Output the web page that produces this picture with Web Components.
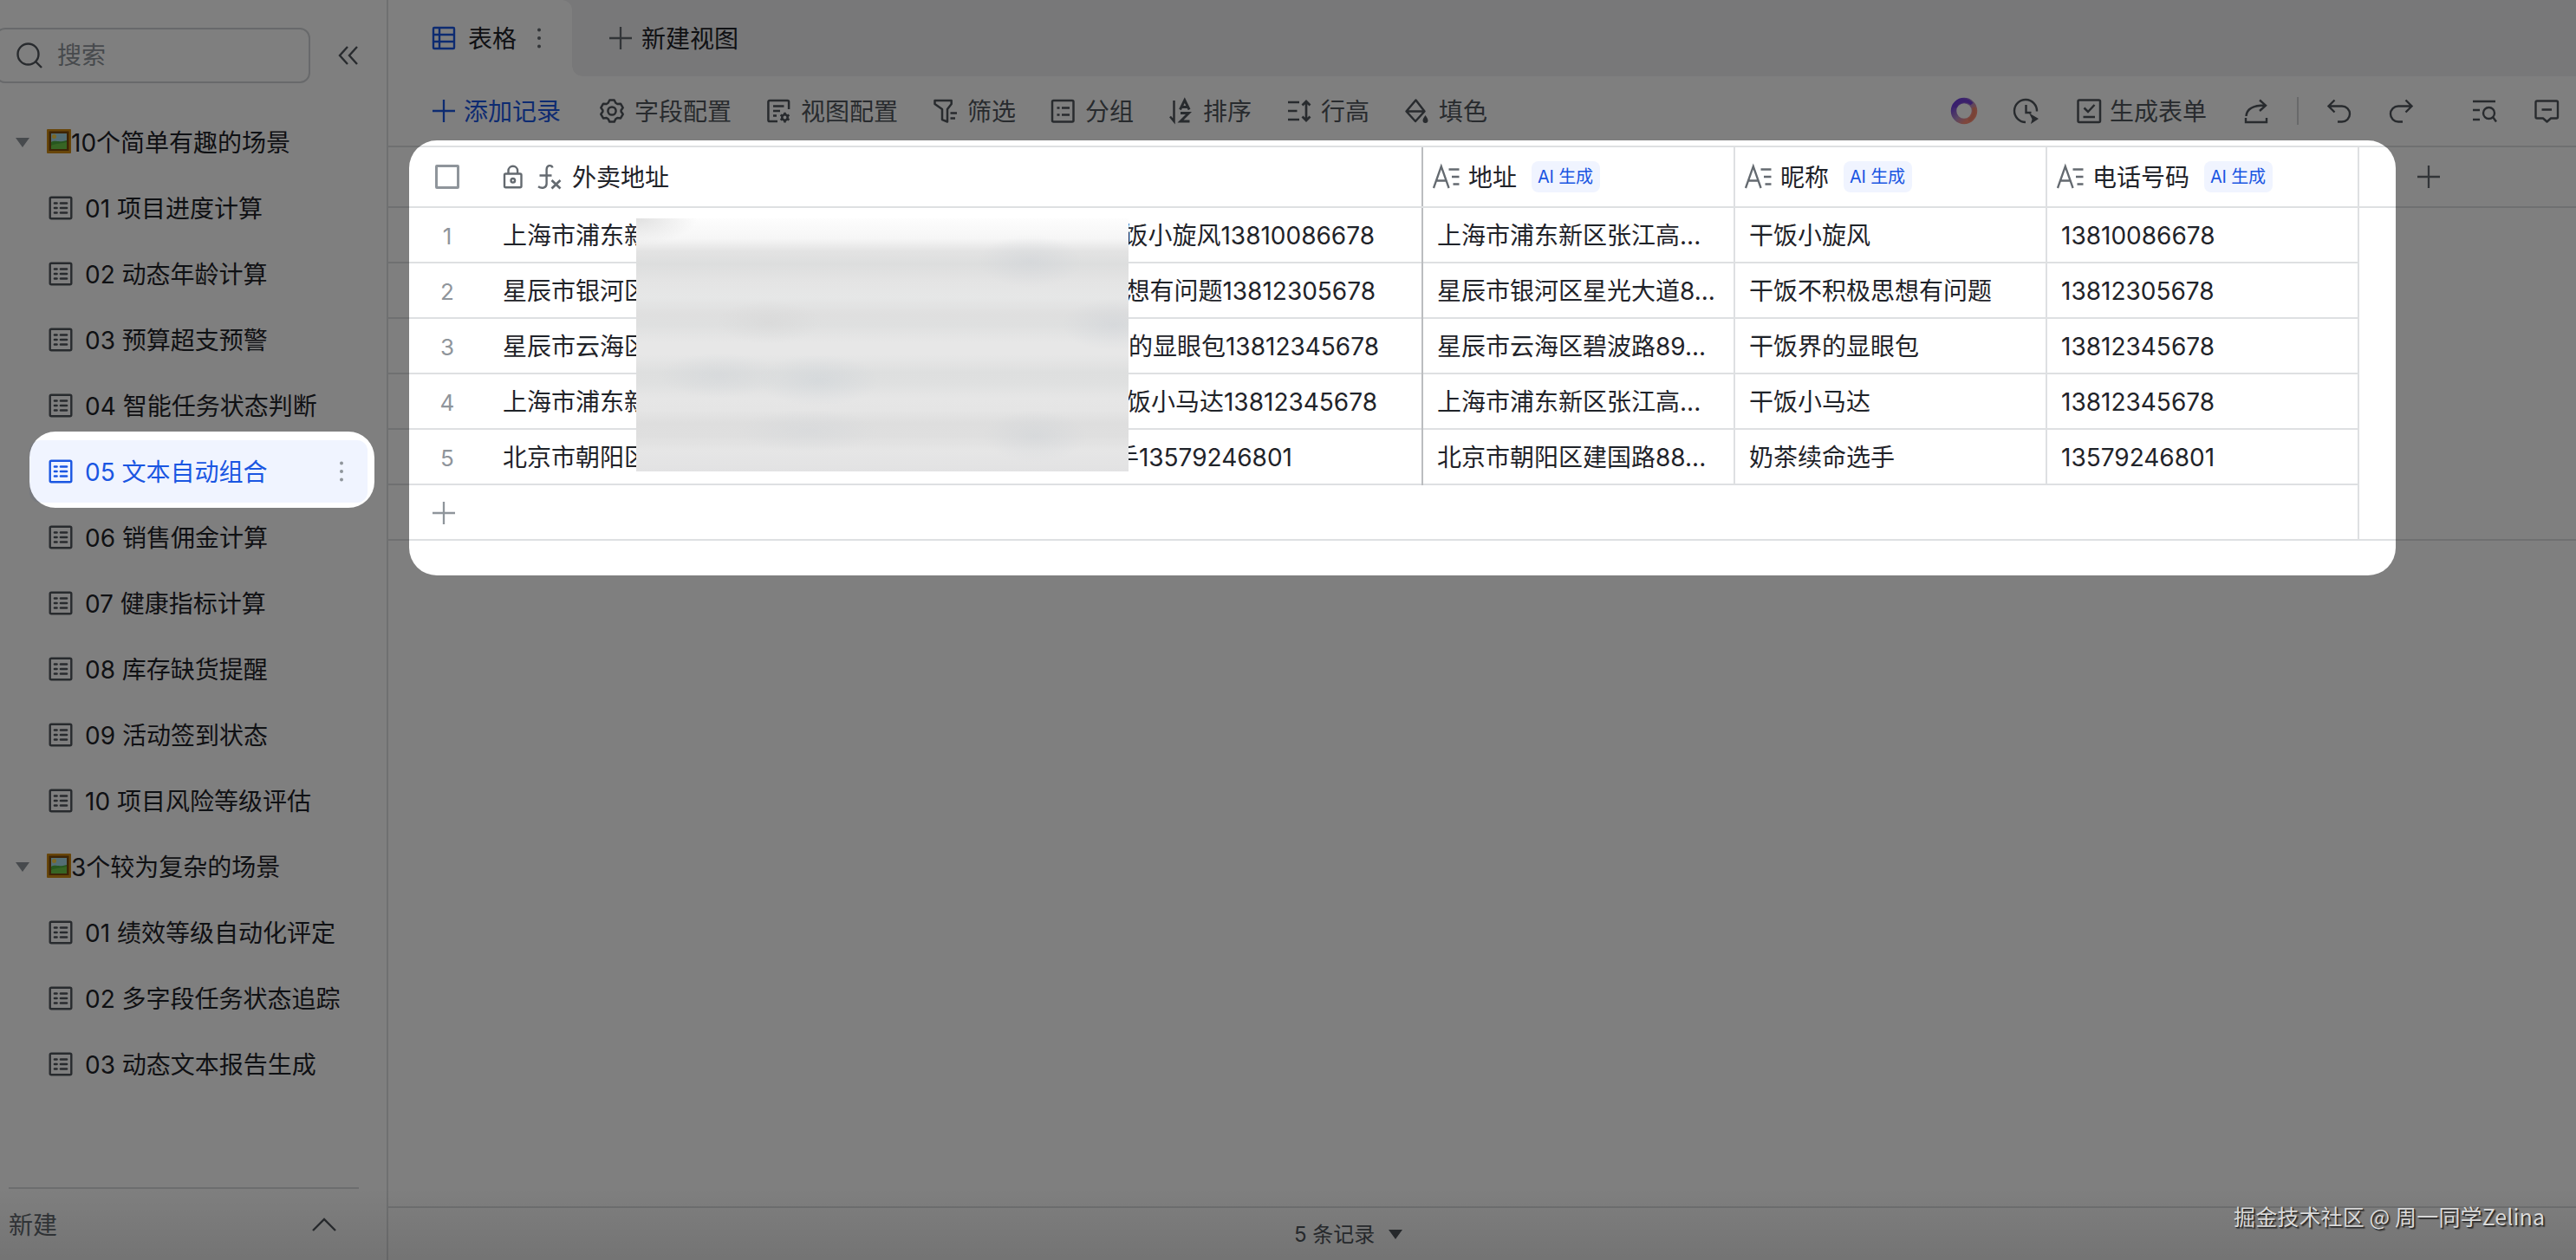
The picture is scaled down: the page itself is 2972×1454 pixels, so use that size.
<!DOCTYPE html>
<html lang="zh-CN">
<head>
<meta charset="utf-8">
<title>多维表格</title>
<style>
html,body{margin:0;padding:0}
body{width:2972px;height:1454px;overflow:hidden;background:#fff;
font-family:Inter,"Noto Sans CJK SC",sans-serif;font-size:28px;line-height:40px;color:#1f2329;
--line:#dee0e2;--blue:#1a56e2;--icon:#51565d}
</style>
</head>
<body>
<base-app></base-app>
<script>
const ICONS={
search:'<circle cx="12.5" cy="12.5" r="12" /><path d="M21 21l7 7"/>',
collapse:'<path d="M13 4L4 14l9 10M24 4l-9 10 9 10"/>',
sheet:'<rect x="1.7" y="1.7" width="24.6" height="24.6" rx="1.5"/><path d="M7 8.5h2.5M7 14h2.5M7 19.5h2.5M14 8.5h7M14 14h7M14 19.5h7" stroke-linecap="round" stroke-width="2.7"/>',
dots:'<g fill="currentColor" stroke="none"><circle cx="14" cy="4.6" r="2"/><circle cx="14" cy="14" r="2"/><circle cx="14" cy="23.6" r="2"/></g>',
grid:'<rect x="2" y="2" width="24" height="24" rx="1"/><path d="M9 2v24M2 10h24M2 18h24"/>',
plus:'<path d="M14 1v26M1 14h26" stroke-width="2.3"/>',
gear:'<path d="M11.3 1.5h5.4l1.6 3.3 2 1.2 3.7-.3 2.7 4.6-2.1 3v1.5l2.1 3-2.7 4.6-3.7-.3-2 1.2-1.6 3.3h-5.4l-1.6-3.3-2-1.2-3.7.3-2.7-4.6 2.1-3v-1.5l-2.1-3L4 5.7l3.7.3 2-1.2z" stroke-linejoin="round"/><circle cx="14" cy="14" r="4.6"/>',
viewcfg:'<path d="M13 26H4a1.6 1.6 0 0 1-1.600-1.600V3.600A1.600 1.600 0 0 1 4 2h20.500a1.600 1.600 0 0 1 1.600 1.600V12M8 8.500h12.500M8 14h8M8 19.500h4"/><circle cx="21.500" cy="21.500" r="3.200" stroke-width="2.600"/><path d="M21.500 15.700v3M21.500 24.500v3M16.500 18.600l2.500 1.400M24 23l2.500 1.400M16.500 24.400L19 23M24 20l2.500-1.400" stroke-width="2.600"/>',
filter:'<path d="M2.500 2h19.200v4l-4.700 6v14.500l-6-2.400V12L2.500 6z" stroke-linejoin="round"/><path d="M20.500 16.500h7.500M20.500 22.500h5.500"/>',
group:'<rect x="2" y="2" width="24.500" height="24.500" rx="1.500"/><path d="M7.500 10.500h3M13 10.500h9M7.500 18.500h3M13 18.500h9"/>',
sort:'<path d="M6.500 2v24L2 20.500"/><path d="M13.500 12.500L18.800 1.500l5.300 11M15.500 9.500h6.600M14 16.500h9.500L14 26h10.500" stroke-width="2.900"/>',
rowh:'<path d="M2 4h13M2 14h10.500M2 24h13M23 3v22M18.500 7.500L23 3l4.500 4.500M18.500 20.500L23 25l4.500-4.500" stroke-width="2.700"/>',
fill:'<path d="M13.500 1.500L2.500 14.500 13 26l10.500-11.500zM3.500 14.500h20" stroke-linejoin="round" stroke-width="2.500"/><path d="M24.500 19c1.800 2.800 3 4.200 3 5.900a3 3 0 0 1-6 0c0-1.700 1.200-3.100 3-5.900z" fill="currentColor" stroke="none"/>',
ring:'<defs><linearGradient id="r" x1="0" y1="0" x2="1" y2="1"><stop offset=".1" stop-color="#6e3de0"/><stop offset=".5" stop-color="#b28cc8"/><stop offset=".8" stop-color="#ff8f78"/></linearGradient></defs><circle cx="14" cy="14" r="12" stroke="url(#r)" stroke-width="6.500"/><path d="M3 10A12 12 0 0 1 23 6" stroke="#7440d8" stroke-width="4"/><path d="M25 10a12 12 0 0 1-6 15" stroke="#f2876c" stroke-width="3.500"/>',
clock:'<path d="M14 27A13 13 0 1 1 27 14.500M14.500 7v9h6"/><path d="M18 16.500L29 23 20 29l1.500-5.500z" fill="currentColor" stroke="none"/>',
form:'<rect x="1.500" y="1.500" width="25.500" height="25.500" rx="1.500"/><path d="M8.500 10.500l4.500 4.500 7.500-8M7.500 21h13.500"/>',
share:'<path d="M2.500 20C3 12 9 7.500 24.500 7.500M18 1.500l7 6.200-7 6.300M2 22v5h24v-5"/>',
undo:'<path d="M9.500 1.500L2.500 8.500l7 7M2.500 8.500h15.500a8.900 8.900 0 0 1 0 18h-5"/>',
redo:'<path d="M18.500 1.500l7 7-7 7M25.500 8.500H10a8.900 8.900 0 0 0 0 18h5"/>',
find:'<path d="M1 3h26M1 13h8M1 24h8"/><circle cx="19.500" cy="16.500" r="6.500"/><path d="M24 21l4 5.500"/>',
comment:'<path d="M3 2.500h22.500a1.500 1.500 0 0 1 1.500 1.500v17a1.500 1.500 0 0 1-1.500 1.500H19l-4.500 4-4.500-4H3a1.500 1.500 0 0 1-1.500-1.500V4A1.500 1.500 0 0 1 3 2.500zM8.500 12.500h11.500" stroke-linejoin="round"/>',
lock:'<rect x="4" y="10.500" width="19.500" height="15.800" rx="1.500"/><path d="M8.500 10.500V7a5.300 5.300 0 0 1 10.600 0v3.500"/><circle cx="13.800" cy="18.300" r="2.300"/>',
fx:'<path d="M19.500 3.500C18.500 .2 12.800-.2 12.600 5.500V22c0 5-5.800 6-9.600 3.300M4.500 12.500h14"/><path d="M18.500 18l10 9.500M28.500 18l-10 9.500" stroke-width="2.800"/>',
text:'<path d="M1 27L9.800 2l8.800 25M4 18.500h11.500M18.500 5.500h12M22 14h8.500M23.500 22.500h7"/>',
up:'<path d="M1 21l13-13 13 13"/>',
caret:'<path d="M6 9h16l-8 11z" fill="currentColor" stroke="none"/>',
picture:'<g stroke="none"><rect width="28" height="28" rx="1" fill="#d08c14"/><path d="M2.500 2.500h23v22.500h-23z" fill="#7a4a0e"/><path d="M5 5h18v18H5z" fill="#a9dcea"/><path d="M5 15c5-3 8 1 18-2v10H5z" fill="#4fae3f"/><path d="M5 19c6-3 12-2 18-4v8H5z" fill="#6fca48"/><circle cx="8.500" cy="8.500" r="2.500" fill="#fbd348"/></g>'
};
const define=(tag,render)=>customElements.define(tag,class extends HTMLElement{
  constructor(){super();this.attachShadow({mode:'open'})}
  connectedCallback(){this.shadowRoot.innerHTML=render(this)}
});
const a=(el,n,d='')=>el.getAttribute(n)??d;

define('ui-icon',el=>`<style>:host{display:block;flex:none;width:${a(el,'w','28')}px;height:28px;color:var(--icon)}
:host([muted]){color:#8f959b}:host([mid]){color:#646a70}:host([blue]){color:var(--blue)}
svg{display:block;overflow:visible;width:100%;height:100%}</style>
<svg viewBox="0 0 ${a(el,'w','28')} 28" fill="none" stroke="currentColor" stroke-width="${a(el,'s','2.4')}">${ICONS[a(el,'name')]}</svg>`);

define('nav-group',el=>`<style>:host{display:flex;align-items:center;height:76px;padding-left:12px;white-space:nowrap}
.p{margin:-2px 0 0 14px}span{padding-top:2px}</style><ui-icon name="caret" muted></ui-icon><ui-icon class="p" name="picture"></ui-icon><span><slot></slot></span>`);

define('nav-item',el=>`<style>:host{display:flex;height:76px;align-items:center}
div{flex:1;display:flex;align-items:center;height:72px;margin-left:34px;padding-left:22px;border-radius:12px;white-space:nowrap}
span{flex:1;margin-left:14px;padding-top:2px}:host([active]) div{background:#f0f4ff;color:var(--blue)}
:host([active]) .d{margin-right:16px}</style>
<div><ui-icon name="sheet" ${el.hasAttribute('active')?'blue':''}></ui-icon><span><slot></slot></span>${el.hasAttribute('active')?'<ui-icon class="d" name="dots" muted></ui-icon>':''}</div>`);

define('side-bar',()=>`<style>:host{display:flex;flex-direction:column;box-sizing:border-box;width:448px;height:1454px;border-right:2px solid var(--line);flex:none}
.top{display:flex;align-items:center;height:126px;box-sizing:border-box;padding-top:2px}
.box{width:364px;height:64px;box-sizing:border-box;border:2px solid #d0d3d6;border-radius:12px;margin-left:-6px;display:flex;align-items:center;padding-left:24px;color:#8f959b;gap:18px}
.c{margin-left:30px}nav{flex:1;width:424px}
footer{margin-left:10px;width:404px;height:84px;border-top:2px solid #d8dadd;display:flex;align-items:center;color:#646a70;box-sizing:border-box}
footer span{flex:1;padding-top:2px}footer ui-icon{margin-right:26px}</style>
<div class="top"><div class="box"><ui-icon name="search"></ui-icon><span>搜索</span></div><ui-icon class="c" name="collapse"></ui-icon></div>
<nav><nav-group>10个简单有趣的场景</nav-group>
${['01 项目进度计算','02 动态年龄计算','03 预算超支预警','04 智能任务状态判断'].map(t=>`<nav-item>${t}</nav-item>`).join('')}
<nav-item active>05 文本自动组合</nav-item>
${['06 销售佣金计算','07 健康指标计算','08 库存缺货提醒','09 活动签到状态','10 项目风险等级评估'].map(t=>`<nav-item>${t}</nav-item>`).join('')}
<nav-group>3个较为复杂的场景</nav-group>
${['01 绩效等级自动化评定','02 多字段任务状态追踪','03 动态文本报告生成'].map(t=>`<nav-item>${t}</nav-item>`).join('')}</nav>
<footer><span>新建</span><ui-icon name="up"></ui-icon></footer>`);

define('view-tabs',()=>`<style>:host{display:flex;height:88px;background:#f1f1f2}
.on{background:#fff;width:212px;box-sizing:border-box;padding-left:50px;display:flex;align-items:center;border-top-right-radius:12px}
.on span{margin:0 12px 0 14px;padding-top:1px}
.curve{width:12px;height:12px;align-self:flex-end;background:radial-gradient(circle at 12px 0,#0000 11.500px,#fff 12px)}
.new{display:flex;align-items:center;gap:10px;margin-left:30px}.new span{padding-top:1px}</style>
<div class="on"><ui-icon name="grid" blue></ui-icon><span>表格</span><ui-icon name="dots" mid></ui-icon></div><div class="curve"></div>
<div class="new"><ui-icon name="plus" mid></ui-icon><span>新建视图</span></div>`);

define('tool-button',el=>`<style>:host{display:flex;align-items:center;gap:12px;color:var(--icon);white-space:nowrap}:host([blue]){color:var(--blue);gap:9px;margin-right:5px}span{padding-top:1px}:host([icon=form]){gap:10px}</style>
<ui-icon name="${a(el,'icon')}" ${el.hasAttribute('blue')?'blue':''} s="2.5"></ui-icon><span><slot></slot></span>`);

define('tool-bar',()=>`<style>:host{display:flex;height:80px;align-items:center;padding-left:50px;gap:40px}
.r{margin-left:auto;display:flex;align-items:center;padding-right:20px}i{width:2px;height:32px;background:#d0d2d5;margin:0 32px 0 33px}</style>
<tool-button icon="plus" blue>添加记录</tool-button><tool-button icon="gear">字段配置</tool-button><tool-button icon="viewcfg">视图配置</tool-button><tool-button icon="filter">筛选</tool-button><tool-button icon="group">分组</tool-button><tool-button icon="sort">排序</tool-button><tool-button icon="rowh">行高</tool-button><tool-button icon="fill">填色</tool-button>
<div class="r"><ui-icon name="ring"></ui-icon><ui-icon name="clock" style="margin-left:43px"></ui-icon><tool-button icon="form" style="margin-left:45px">生成表单</tool-button><ui-icon name="share" style="margin-left:43px"></ui-icon><i></i><ui-icon name="undo"></ui-icon><ui-icon name="redo" style="margin-left:45px"></ui-icon><ui-icon name="find" style="margin-left:67px"></ui-icon><ui-icon name="comment" style="margin-left:44px"></ui-icon></div>`);

define('ai-tag',()=>`<style>:host{display:block;height:36px;line-height:36px;padding:0 8px 0 7px;border-radius:8px;background:#f0f4ff;color:var(--blue);font-size:20px;letter-spacing:-.2px;margin-left:17px;white-space:nowrap}</style>AI 生成`);

define('field-head',el=>`<style>:host{display:flex;align-items:center;width:360px;box-sizing:border-box;padding-left:11px;border-right:2px solid var(--line);white-space:nowrap}
span{margin-left:10px;padding-top:1px}</style><ui-icon name="text" w="31" mid s="2.300"></ui-icon><span><slot></slot></span><ai-tag></ai-tag>`);

define('record-row',el=>{const [n,l,r,w,ad,nick,tel]=el.getAttribute('data').split('|');return `<style>:host{display:flex;height:64px;box-sizing:border-box;border-bottom:2px solid var(--line);width:2274px;line-height:65px;white-space:nowrap}
.n{width:132px;box-sizing:border-box;text-align:center;padding-left:4px;color:#8f959b;font-size:26px}
.m{width:1062px;height:64px;box-sizing:border-box;border-right:2px solid #bbbdc0;display:flex}
.l{width:154px}.r{margin-left:568px;width:${w}px;display:flex;justify-content:flex-end}
.c{width:360px;height:64px;box-sizing:border-box;border-right:2px solid var(--line);padding-left:16px}</style>
<div class="n">${n}</div><div class="m"><div class="l">${l}</div><div class="r"><span>${r}</span></div></div><div class="c">${ad}</div><div class="c">${nick}</div><div class="c">${tel}</div>`});

define('data-grid',()=>`<style>:host{display:flex;flex-direction:column;position:relative;border-top:2px solid var(--line);height:1222px;flex:none}
.h{display:flex;height:70px;box-sizing:border-box;border-bottom:2px solid var(--line);line-height:68px}
.m{width:1194px;box-sizing:border-box;border-right:2px solid #bbbdc0;display:flex;align-items:center}.m span{padding-top:1px}
.k{width:28px;height:28px;box-sizing:border-box;border:3px solid #8f959b;border-radius:2px;margin:0 48px 0 54px}
.h .pl{align-self:center;margin-left:66px}
.add{height:64px;box-sizing:border-box;border-bottom:2px solid var(--line);display:flex}
.add div{width:2274px;box-sizing:border-box;border-right:2px solid var(--line);padding:2px 0 0 50px;display:flex;align-items:center}
.veil{position:absolute;left:286px;top:82px;width:568px;height:292px;background:
radial-gradient(ellipse 70px 30px at 37% 64%,#ccd2d777,#0000),radial-gradient(ellipse 70px 26px at 17% 62%,#d0d4d877,#0000),radial-gradient(ellipse 60px 30px at 80% 17%,#cdd1d677,#0000),radial-gradient(ellipse 60px 30px at 97% 42%,#cdd1d677,#0000),radial-gradient(ellipse 60px 30px at 81% 86%,#ced2d677,#0000),radial-gradient(ellipse 80px 25px at 35% 84%,#d3d6d977,#0000),radial-gradient(ellipse 60px 25px at 27% 41%,#d5d5d577,#0000),radial-gradient(ellipse 70px 30px at 0 0,#e0e0e0,#0000),
linear-gradient(#fdfdfd 0,#f6f6f6 8%,#e3e3e3 13%,#dddede 18%,#e4e4e4 25%,#e6e7e7 31%,#dfdfdf 38%,#dfe0e0 42%,#e7e7e7 49%,#e7e7e7 54%,#dedfdf 61%,#dfe0e0 65%,#e6e6e6 71%,#e5e5e5 76%,#dedede 81%,#dfdfdf 86%,#e6e6e6 92%,#e2e2e3)}</style>
<div class="h"><div class="m"><div class="k"></div><ui-icon name="lock" mid></ui-icon><ui-icon name="fx" mid style="margin:0 14px 0 12px"></ui-icon><span>外卖地址</span></div><field-head>地址</field-head><field-head>昵称</field-head><field-head>电话号码</field-head><ui-icon class="pl" name="plus" mid></ui-icon></div>
${['1|上海市浦东新|饭小旋风13810086678|284|上海市浦东新区张江高...|干饭小旋风|13810086678','2|星辰市银河区|想有问题13812305678|285|星辰市银河区星光大道8...|干饭不积极思想有问题|13812305678','3|星辰市云海区|的显眼包13812345678|289|星辰市云海区碧波路89...|干饭界的显眼包|13812345678','4|上海市浦东新|饭小马达13812345678|287|上海市浦东新区张江高...|干饭小马达|13812345678','5|北京市朝阳区|手13579246801|189|北京市朝阳区建国路88...|奶茶续命选手|13579246801'].map(d=>`<record-row data="${d}"></record-row>`).join('')}
<div class="add"><div><ui-icon name="plus" muted></ui-icon></div></div><div class="veil"></div>`);

define('status-bar',()=>`<style>:host{display:flex;flex:1;align-items:center;border-top:2px solid #dcdee0;font-size:24px;color:#51565d;padding-left:1045px;box-sizing:border-box;gap:10px}span{padding-top:1px}</style><span>5 条记录</span><ui-icon name="caret"></ui-icon>`);

define('page-mark',()=>`<style>:host{display:block;position:absolute;left:2577px;top:1383px;font:25px/40px "Noto Sans CJK SC",sans-serif;letter-spacing:.14px;color:#dadada;text-shadow:1px 1px 1px #222,2px 2px 1px #444;white-space:nowrap}</style>掘金技术社区 @ 周一同学Zelina`);

define('spot-light',()=>`<style>:host{display:block;position:absolute;inset:0}svg{display:block}</style>
<svg width="2972" height="1454"><defs><linearGradient id="f" x1="0" y1="0" x2="0" y2="1"><stop stop-color="#000" stop-opacity="0"/><stop offset="1" stop-color="#000" stop-opacity=".09"/></linearGradient></defs>
<path fill="#000" fill-opacity=".5" fill-rule="evenodd" d="M0 0H2972V1454H0zM64 498H402a30 30 0 0 1 30 30v28a30 30 0 0 1-30 30H64a30 30 0 0 1-30-30v-28a30 30 0 0 1 30-30zM504 162H2732a32 32 0 0 1 32 32V632a32 32 0 0 1-32 32H504a32 32 0 0 1-32-32V194a32 32 0 0 1 32-32z"/>
<rect y="1370" width="2972" height="84" fill="url(#f)"/></svg>`);

define('base-app',()=>`<style>:host{display:flex;position:relative;width:2972px;height:1454px;overflow:hidden}
main{flex:1;display:flex;flex-direction:column;min-width:0}</style>
<side-bar></side-bar><main><view-tabs></view-tabs><tool-bar></tool-bar><data-grid></data-grid><status-bar></status-bar></main><spot-light></spot-light><page-mark></page-mark>`);
</script>
</body>
</html>
